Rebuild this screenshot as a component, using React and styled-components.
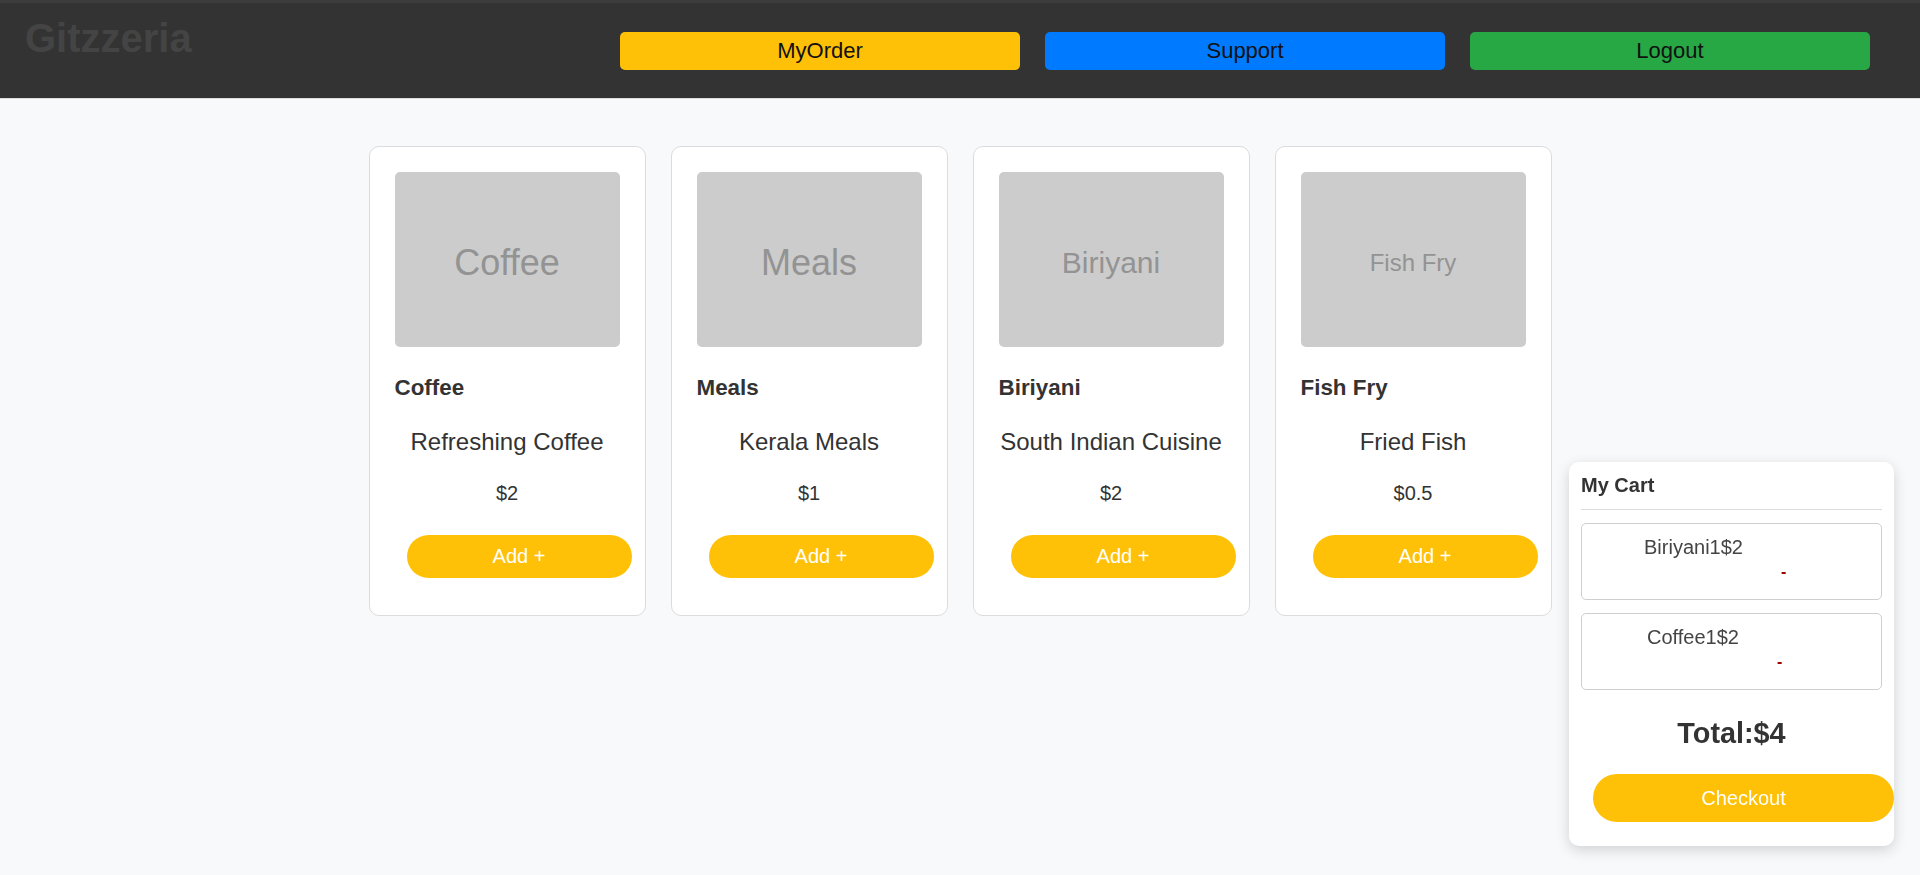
import React from "react";
import styled, { createGlobalStyle } from "styled-components";

const GlobalStyle = createGlobalStyle`
  * { box-sizing: border-box; }
  html, body { margin: 0; padding: 0; }
  body {
    background: #f8f9fa;
    font-family: "Liberation Sans", Arial, sans-serif;
    color: #333;
    min-height: 100vh;
  }
`;

const Header = styled.header`
  display: flex;
  justify-content: space-between;
  align-items: center;
  height: 99px;
  padding: 0 50px 0 25px;
  background: #333;
  border-top: 3px solid #3c3c3c;
  border-bottom: 1px solid #dcdcdc;
`;

const Logo = styled.h1`
  align-self: flex-start;
  margin: 12px 0 0;
  font-size: 40px;
  line-height: 46px;
  font-weight: 700;
  color: #444;
`;

const Nav = styled.nav`
  display: flex;
  gap: 25px;
`;

const NavButton = styled.button`
  width: 400px;
  height: 38px;
  padding: 0;
  border: none;
  border-radius: 5px;
  background: ${(p) => p.$bg};
  color: #111;
  font-family: inherit;
  font-size: 22px;
  line-height: 38px;
  cursor: pointer;
`;

const Main = styled.main`
  padding-top: 47px;
`;

const CardRow = styled.div`
  display: flex;
  justify-content: center;
  gap: 25px;
`;

const Card = styled.div`
  width: 277px;
  padding: 25px;
  background: #fff;
  border: 1px solid #dcdcdc;
  border-radius: 10px;
  display: flex;
  flex-direction: column;
`;

const Placeholder = styled.div`
  width: 225px;
  height: 175px;
  padding-top: 7px;
  border-radius: 5px;
  background: #cccccc;
  color: #939393;
  display: flex;
  align-items: center;
  justify-content: center;
  font-size: ${(p) => p.$size}px;
`;

const Title = styled.h3`
  margin: 28px 0 0;
  font-size: 22.4px;
  line-height: 26px;
  font-weight: 700;
  color: #333;
`;

const Desc = styled.p`
  margin: 27px 0 0;
  font-size: 24px;
  line-height: 28px;
  text-align: center;
  color: #333;
`;

const Price = styled.p`
  margin: 26px 0 0;
  font-size: 20px;
  line-height: 23px;
  text-align: center;
  color: #333;
`;

const PillButton = styled.button`
  flex: none;
  width: 100%;
  margin: ${(p) => p.$mt}px 0 12px 12px;
  padding: ${(p) => p.$pad}px 0;
  border: none;
  border-radius: 999px;
  background: #ffc107;
  color: #fff;
  font-family: inherit;
  font-size: 20px;
  line-height: ${(p) => p.$lh}px;
  cursor: pointer;
`;

const Cart = styled.aside`
  position: fixed;
  right: 26px;
  bottom: 29px;
  width: 325px;
  padding: 12px;
  background: #fff;
  border-radius: 10px;
  box-shadow: 0 4px 14px rgba(0, 0, 0, 0.16);
  display: flex;
  flex-direction: column;
`;

const CartTitle = styled.h4`
  margin: 0;
  padding-bottom: 12px;
  border-bottom: 1px solid #dcdcdc;
  font-size: 20px;
  line-height: 23px;
  font-weight: 700;
  color: #333;
`;

const CartItem = styled.div`
  margin-top: 13px;
  height: 77px;
  padding: 12px 0 0;
  border: 1px solid #cfcfcf;
  border-radius: 5px;
  display: flex;
  flex-direction: column;
  align-items: flex-start;
`;

const ItemText = styled.span`
  margin-left: ${(p) => p.$offset}px;
  font-size: 20px;
  line-height: 23px;
  color: #444;
`;

const RemoveButton = styled.button`
  margin-left: ${(p) => p.$offset}px;
  padding: 4px 0;
  border: none;
  background: transparent;
  color: #a00000;
  font-family: inherit;
  font-size: 16px;
  font-weight: 700;
  line-height: 18px;
  cursor: pointer;
`;

const Total = styled.h2`
  margin: 27px 0 0;
  text-align: center;
  font-size: 28.8px;
  line-height: 33px;
  font-weight: 700;
  color: #333;
`;

const items = [
  { name: "Coffee", desc: "Refreshing Coffee", price: "$2", ph: 36 },
  { name: "Meals", desc: "Kerala Meals", price: "$1", ph: 36 },
  { name: "Biriyani", desc: "South Indian Cuisine", price: "$2", ph: 30 },
  { name: "Fish Fry", desc: "Fried Fish", price: "$0.5", ph: 24 },
];

const cart = [
  { label: "Biriyani1$2", text: 62, minus: 199 },
  { label: "Coffee1$2", text: 65, minus: 195 },
];

export default function App() {
  return (
    <>
      <GlobalStyle />
      <Header>
        <Logo>Gitzzeria</Logo>
        <Nav>
          <NavButton $bg="#ffc107">MyOrder</NavButton>
          <NavButton $bg="#007bff">Support</NavButton>
          <NavButton $bg="#28a745">Logout</NavButton>
        </Nav>
      </Header>
      <Main>
        <CardRow>
          {items.map((it) => (
            <Card key={it.name}>
              <Placeholder $size={it.ph}>{it.name}</Placeholder>
              <Title>{it.name}</Title>
              <Desc>{it.desc}</Desc>
              <Price>{it.price}</Price>
              <PillButton $mt={30} $pad={10} $lh={23}>Add +</PillButton>
            </Card>
          ))}
        </CardRow>
      </Main>
      <Cart>
        <CartTitle>My Cart</CartTitle>
        {cart.map((c) => (
          <CartItem key={c.label}>
            <ItemText $offset={c.text}>{c.label}</ItemText>
            <RemoveButton $offset={c.minus}>-</RemoveButton>
          </CartItem>
        ))}
        <Total>Total:$4</Total>
        <PillButton $mt={24} $pad={12} $lh={24}>Checkout</PillButton>
      </Cart>
    </>
  );
}
